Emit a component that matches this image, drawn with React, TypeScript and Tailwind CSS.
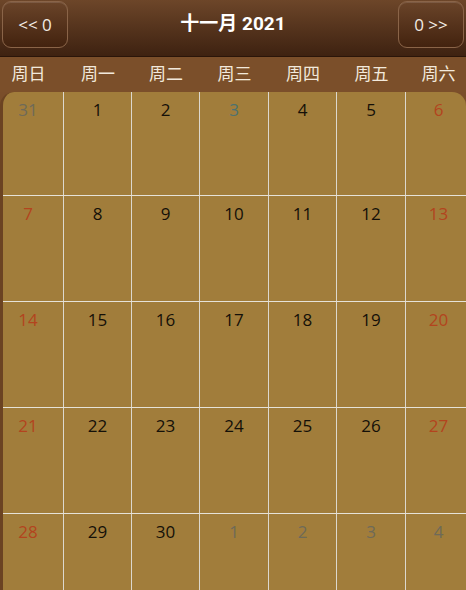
import React from 'react';

const weekDays = ['周日', '周一', '周二', '周三', '周四', '周五', '周六'];

type Day = { n: number; kind: 'cur' | 'other' | 'today' };

const buildDays = (): Day[] => {
  const days: Day[] = [{ n: 31, kind: 'other' }];
  for (let i = 1; i <= 30; i++) days.push({ n: i, kind: i === 3 ? 'today' : 'cur' });
  for (let i = 1; i <= 4; i++) days.push({ n: i, kind: 'other' });
  return days;
};

const headW = ['w-[64px] pr-[7px]', 'w-[68px]', 'w-[68px]', 'w-[69px]', 'w-[68px]', 'w-[69px]', 'flex-1 pl-[5px]'];
const cellW = ['w-[61px] pr-[10px]', 'w-[68px]', 'w-[68px]', 'w-[69px]', 'w-[68px]', 'w-[69px]', 'flex-1 pl-[5px]'];

const App: React.FC = () => {
  const days = buildDays();
  const rows: Day[][] = [];
  for (let i = 0; i < days.length; i += 7) rows.push(days.slice(i, i + 7));

  const color = (d: Day, col: number) => {
    if (d.kind === 'other') return 'text-[#6e6a58]';
    if (d.kind === 'today') return 'text-[#4c7270]';
    if (col === 0 || col === 6) return 'text-[#b3441e]';
    return 'text-[#141008]';
  };

  return (
    <div className="w-[466px] h-[590px] overflow-hidden bg-[#7a4e2a] flex flex-col" style={{ fontFamily: '"Open Sans", "Noto Sans CJK SC", sans-serif' }}>
      {/* header */}
      <div className="h-[57px] shrink-0 flex items-start justify-between px-[2px] pt-[1px] bg-gradient-to-b from-[#6d4629] to-[#3e2211] border-b border-[#2a1509]">
        <button className="w-[66px] h-[47px] rounded-[9px] border border-[#8a6448] bg-gradient-to-b from-[#6a4429] to-[#43230f] text-[#f3ece4] text-[17px] shadow-[inset_0_1px_0_rgba(255,255,255,0.12)]">
          &lt;&lt; 0
        </button>
        <div className="text-white text-[19px] font-bold mt-[9px]" style={{ fontFamily: 'Roboto, "Noto Sans CJK SC", sans-serif' }}>
          十一月 2021
        </div>
        <button className="w-[66px] h-[47px] rounded-[9px] border border-[#8a6448] bg-gradient-to-b from-[#6a4429] to-[#43230f] text-[#f3ece4] text-[17px] shadow-[inset_0_1px_0_rgba(255,255,255,0.12)]">
          0 &gt;&gt;
        </button>
      </div>

      {/* week header */}
      <div className="h-[35px] shrink-0 flex items-center bg-[#7b4f2a] text-[#f2e9dc] text-[17px]" style={{ fontFamily: '"Noto Sans CJK SC", sans-serif' }}>
        {weekDays.map((w, i) => (
          <div key={w} className={`${headW[i]} text-center -mt-[3px]`}>{w}</div>
        ))}
      </div>

      {/* grid */}
      <div className="flex-1 rounded-t-[14px] bg-[#a17d3b] border-l-[3px] border-[#6b4322] overflow-hidden">
        {rows.map((row, r) => (
          <div key={r} className={`flex ${r === 0 ? 'h-[104px]' : 'h-[106px]'} border-b border-[#e6e2d8]`}>
            {row.map((d, c) => (
              <div
                key={c}
                className={`${cellW[c]} ${c < 6 ? 'border-r border-[#dcd8ce]' : ''} text-center pt-[5px] text-[17px] ${color(d, c)}`}
              >
                {d.n}
              </div>
            ))}
          </div>
        ))}
      </div>
    </div>
  );
};

export default App;
